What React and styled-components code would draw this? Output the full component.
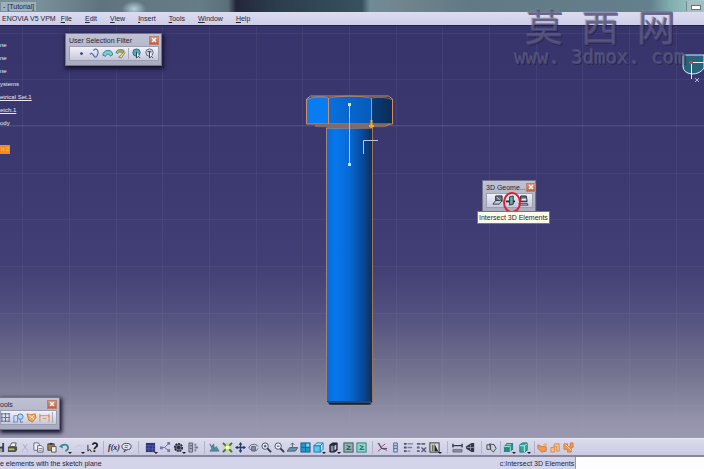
import React from "react";
import styled, { createGlobalStyle } from "styled-components";

const GlobalStyle = createGlobalStyle`
  * { box-sizing: border-box; }
  body {
    margin: 0;
    background: #37346a;
    font-family: "Liberation Sans", Arial, sans-serif;
    font-size: 7px;
    line-height: 9px;
    color: #26263a;
  }
  button, input { font: inherit; color: inherit; }
`;

// 12x12 glyphs used by every toolbar
const icons = {
  save: <><rect x="1" y="1" width="10" height="10" fill="#3c4256" /><rect x="3" y="1" width="6" height="4" fill="#d9dcea" /><rect x="3" y="7" width="6" height="4" fill="#9aa5a0" /></>,
  print: <><path d="M3 5 5 1h5L9 5z" fill="#eee" stroke="#555" /><path d="M1 5h10v4l-2 2H1z" fill="#4c5348" /><path d="M2 8h6" stroke="#b5c455" strokeWidth="2" /></>,
  cut: <path d="M3 2l5 7M8 2 3 9M2 10h1M8 10h1" stroke="#aaaac4" />,
  copy: <><path d="M1 1h5l1 2v6H1z" fill="#eef" stroke="#666b80" /><path d="M5 4h4l2 2v5H5z" fill="#fff" stroke="#555b70" /><path d="M6 7h4M6 9h4" stroke="#778" /></>,
  paste: <><path d="M2 2h7v7H2z" fill="#9b8350" stroke="#4a4334" /><path d="M4 1h3v2H4z" fill="#333" /><path d="M6 5h5v6H6z" fill="#eee" stroke="#555" /></>,
  undo: <><path d="M2 5c3-3 7-3 8 1 0 2-1 3-3 4" fill="none" stroke="#3d8a94" strokeWidth="2" /><path d="M0 5l4-3v5z" fill="#3d8a94" /></>,
  redo: <path d="M2 6c2-3 5-3 7-1" fill="none" stroke="#c2c2d8" />,
  help: <><path d="M1 3v7l2-2 2 3" fill="none" stroke="#222" /><path d="M6 3c1-3 6-2 5 1 0 1-3 2-3 4M8 9v2" fill="none" stroke="#222" strokeWidth="2" /></>,
  chat: <><ellipse cx="6" cy="5" rx="5" ry="3.5" fill="#e5e5f2" stroke="#3c3c50" /><path d="M5 8l-2 3 4-3" fill="#e5e5f2" stroke="#3c3c50" /><path d="M4 4h4M4 6h3" stroke="#667" /></>,
  table: <><rect x="1" y="1" width="10" height="10" fill="#2e3682" /><path d="M1 4h10M4 4v7M8 4v7M1 7.500h10" stroke="#6870aa" strokeWidth=".6" /></>,
  tree: <><path d="M2 6h3l4-4M5 6l4 3" stroke="#666a90" fill="none" /><path d="M0 5h3v3H0zM8 0h3v3H8zM8 8h3v3H8z" fill="#7377a0" /></>,
  gear: <><circle cx="6" cy="6" r="4" fill="#777a90" stroke="#252838" strokeWidth="2" strokeDasharray="2 1" /><circle cx="6" cy="6" r="2" fill="#272b3c" /></>,
  law: <><path d="M1 1h4v10H1zM2 4h3M2 7h3" fill="#aab" stroke="#5a5f78" /><path d="M7 3h2M7 6h4M7 9h2" stroke="#777b96" strokeWidth="2" /></>,
  fly: <path d="M1 2l2 3 2-3 1 5 2-2 3 5H1l2-3z" fill="#4b8f9b" stroke="#486376" strokeWidth=".6" />,
  fit: <><rect x="1" y="1" width="10" height="10" fill="#cadf79" /><path d="M1 1l3 3M11 1 8 4M1 11l3-3M11 11 8 8" stroke="#2d7a4a" strokeWidth="2" /><circle cx="6" cy="6" r="2" fill="#fff" /></>,
  pan: <><path d="M6 1v10M1 6h10" stroke="#28386f" strokeWidth="1.5" /><path d="M6 0l2 3H4zM6 12l2-3H4zM0 6l3-2v4zM12 6 9 4v4z" fill="#28386f" /></>,
  rotate: <><path d="M1 7c0-5 8-6 10-2M11 7c-2 4-8 4-9 0" fill="none" stroke="#555b74" /><path d="M4 5h4v4H4z" fill="#8f94ac" stroke="#555b74" /></>,
  zoomIn: <><circle cx="4.500" cy="4.500" r="3.500" fill="#e9f4fa" stroke="#3d4865" /><path d="M7 7l4 4" stroke="#34364a" strokeWidth="2" /><path d="M3 4.500h3M4.500 3v3" stroke="#335" /></>,
  zoomOut: <><circle cx="4.500" cy="4.500" r="3.500" fill="#e9f4fa" stroke="#3d4865" /><path d="M7 7l4 4" stroke="#34364a" strokeWidth="2" /><path d="M3 4.500h3" stroke="#335" /></>,
  normal: <><path d="M0 10l3-4h9l-3 4z" fill="#5f93a8" stroke="#54617c" /><path d="M6 7V1M4 3l2-2 2 2" stroke="#59627a" fill="none" /></>,
  multi: <><rect x="1" y="1" width="10" height="10" fill="#2496c6" stroke="#245b91" /><path d="M6 1v10M1 6h10" stroke="#2b5f94" /><rect x="7" y="2" width="3" height="3" fill="#7fdaf0" /></>,
  cube: <><path d="M1 4h7v7H1z" fill="#56c9ec" stroke="#2177a8" /><path d="M1 4l3-3h7L8 4zM8 4l3-3v7l-3 3z" fill="#a4e9f8" stroke="#2177a8" /></>,
  shade: <><path d="M2 3l3-2h5v8l-3 2H2z" fill="#252936" stroke="#252936" /><path d="M3 4h3v6H3z" fill="#858b9d" /><path d="M7 4l2-1v5l-2 1z" fill="#ccd" /></>,
  hide: <><rect x="1" y="1" width="10" height="10" fill="#8fb5b2" stroke="#394f55" /><path d="M4 4l4 1-4 3h5" fill="none" stroke="#21474b" /></>,
  swap: <><rect x="1" y="1" width="10" height="10" fill="#8ed6c9" stroke="#307b78" /><path d="M4 4l4 1-4 3h5" fill="none" stroke="#155c5d" /></>,
  axis: <><path d="M2 1l3 6 6 2M5 7 1 10M4 6 9 2" stroke="#a53b52" fill="none" /><path d="M1 1l4 6h6" stroke="#3c3f69" fill="none" /></>,
  bar: <path d="M4 1h4v10H4zM4 4h4M4 7h4" fill="#b8cce3" stroke="#566a9c" />,
  list: <><path d="M1 2h3M1 6h3M1 10h3" stroke="#4c526f" strokeWidth="2" /><path d="M5 2h6M5 6h5M5 10h3" stroke="#7a809a" strokeWidth="1.500" /></>,
  listX: <><path d="M1 2h4M1 6h3M1 10h3M6 2h4" stroke="#5c637e" strokeWidth="2" /><path d="M6 6l5 5M11 6l-5 5" stroke="#555b77" strokeWidth="1.500" /></>,
  light: <><rect x="1" y="1" width="10" height="10" fill="#ddd" stroke="#252936" /><path d="M6 2l4 8H6z" fill="#1f222b" /><path d="M3 3h2v7H3z" fill="#717447" /></>,
  measure: <><path d="M1 2v4M11 2v4M1 4h10" stroke="#333950" strokeWidth="1.500" /><path d="M1 8h10v3H1z" fill="#8b90a5" stroke="#424960" strokeWidth=".6" /></>,
  mass: <><path d="M1 5l6-4h3v10H7L1 7z" fill="#343747" /><path d="M6 3v6M2 6h8" stroke="#8e91aa" /></>,
  grab: <path d="M1 3h4v5H1zM4 2l5 1 2 4-3 4-3-3z" fill="#d2cfd6" stroke="#404359" />,
  plane: <><path d="M1 5l3-4h7v7l-3 3H1z" fill="#268b84" /><path d="M1 5h7v6M4 3h5" stroke="#b1e4dc" fill="none" /></>,
  box: <><path d="M2 3l3-2h5v8l-3 2H2z" fill="#37aaa0" stroke="#17736f" /><path d="M2 4h5v7M7 4l3-2" stroke="#bdf1e9" fill="none" /></>,
  orange1: <><path d="M1 3l4 2h5v5l-5 1-4-4z" fill="#ef9b52" stroke="#cf7842" /><circle cx="9" cy="3" r="2" fill="#e8b47e" /></>,
  orange2: <path d="M1 6h4v5H1zM5 2h5v8H7V5H4z" fill="#efc08d" stroke="#d98c50" />,
  orange3: <><path d="M1 2h4v3h3V1h3v5H9v5H5V8H1z" fill="#ef9b57" stroke="#d27b45" /><path d="M3 3l6 6" stroke="#fce0bd" /></>,
  point: <circle cx="6" cy="6" r="1.500" fill="#293a8c" />,
  curve: <path d="M1 7c3-4 4 3 6 3s4-6 2-8-4 0-4 1" fill="none" stroke="#4773aa" strokeWidth="1.300" />,
  surface: <path d="M1 8c0-6 9-8 11-1L9 9C8 6 5 6 4 9z" fill="#7fcbd2" stroke="#28818c" />,
  volume: <><path d="M1 5c1-4 7-4 9-2L8 5C6 4 4 4 3 6z" fill="#a7b862" stroke="#4a6c45" strokeWidth=".8" /><path d="M4 10l6-6 1 1-4 6z" fill="#e7d983" stroke="#6d7044" strokeWidth=".8" /></>,
  selA: <><circle cx="6" cy="5" r="4" fill="#54afb3" stroke="#246d7c" /><path d="M6 4v7l2-2 2 2" stroke="#2b354b" fill="#fff" /></>,
  selB: <><circle cx="6" cy="5" r="4" fill="#cbd3df" stroke="#59667e" /><path d="M6 4v7l2-2 2 2M4 4h4" stroke="#2b354b" fill="#fff" /></>,
  grid: <path d="M1 2h10M1 6h10M1 10h10M2 1v10M6 1v10M10 1v10" stroke="#4b6db1" />,
  snap: <><path d="M1 11V4h4v7M0 11h5" stroke="#5b90cf" fill="none" /><circle cx="8" cy="5" r="3" fill="#b5d6ef" stroke="#487cc0" /><path d="M8 8v3h3" stroke="#487cc0" fill="none" /></>,
  construct: <><path d="M1 2l4 1 5-1 1 4-4 5-4-2z" fill="#f0a354" stroke="#d87729" /><path d="M3 3l6 5M9 3 5 7" stroke="#fff0cd" /></>,
  constraint: <path d="M1 11V4h10v7M4 7h4M1 6V2M11 6V2" fill="none" stroke="#e98543" />,
  project: <><path d="M4 1h7v6H4z" fill="#69717b" stroke="#242936" /><path d="M1 10l3-4h7l-3 4z" fill="#baccd0" stroke="#30394a" /><path d="M5 2l4 4" stroke="#b6e6dd" /></>,
  intersect: <><path d="M1 7h10" stroke="#252d39" strokeWidth="2" /><path d="M5 2l4-1v9l-4 1z" fill="#65aaa4" stroke="#252d39" /></>,
  silhouette: <><path d="M3 1h6l1 6H2z" fill="#647079" stroke="#272b37" /><path d="M1 9h9l1 2H2z" fill="#cce" stroke="#334" /><path d="M4 5h5" stroke="#eee" strokeWidth="2" /></>,
};

const bottomTools = [
  { icon: "save", label: "Save", clipped: true },
  { icon: "print", label: "Print" },
  { icon: "cut", label: "Cut" },
  { icon: "copy", label: "Copy" },
  { icon: "paste", label: "Paste" },
  { icon: "undo", label: "Undo", menu: true },
  { icon: "redo", label: "Redo", menu: true, tight: true },
  { icon: "help", label: "What's this" },
  { sep: 8 },
  { text: "f(x)", label: "Formula" },
  { icon: "chat", label: "Comment" },
  { sep: 11 },
  { icon: "table", label: "Design table", menu: true },
  { icon: "tree", label: "Relations" },
  { icon: "gear", label: "Knowledge", menu: true },
  { icon: "law", label: "Law" },
  { sep: 8 },
  { icon: "fly", label: "Fly mode" },
  { icon: "fit", label: "Fit all in" },
  { icon: "pan", label: "Pan" },
  { icon: "rotate", label: "Rotate" },
  { icon: "zoomIn", label: "Zoom in" },
  { icon: "zoomOut", label: "Zoom out" },
  { icon: "normal", label: "Normal view" },
  { icon: "multi", label: "Multi-view" },
  { icon: "cube", label: "Isometric view", menu: true },
  { icon: "shade", label: "View mode", menu: true },
  { icon: "hide", label: "Hide or show" },
  { icon: "swap", label: "Swap visible space" },
  { sep: 8 },
  { icon: "axis", label: "Axis system" },
  { icon: "bar", label: "Exit" },
  { icon: "list", label: "Mean dimensions" },
  { icon: "listX", label: "Update" },
  { icon: "light", label: "Lighting", menu: true },
  { sep: 8 },
  { icon: "measure", label: "Measure between" },
  { icon: "mass", label: "Measure inertia" },
  { sep: 8 },
  { icon: "grab", label: "Catalog" },
  { sep: 4 },
  { icon: "plane", label: "Plane", menu: true },
  { icon: "box", label: "Material", menu: true },
  { sep: 4 },
  { icon: "orange1", label: "Part analysis" },
  { icon: "orange2", label: "Body analysis" },
  { icon: "orange3", label: "Assembly analysis" },
];

const menus = ["File", "Edit", "View", "Insert", "Tools", "Window", "Help"];

const treeNodes = [
  { text: "ne" },
  { text: "ne" },
  { text: "ne" },
  { text: "ystems" },
  { text: "etrical Set.1", link: true },
  { text: "etch.1", link: true },
  { text: "ody" },
  { text: "" },
  { text: "h.2", active: true },
];

const Window = styled.div`
  position: relative;
  display: flex;
  flex-direction: column;
  min-height: 100vh;
`;

const TitleBar = styled.header`
  display: flex;
  align-items: center;
  justify-content: space-between;
  height: 12px;
  padding-left: 1px;
  background:
    radial-gradient(ellipse 12px 8px at 134px 9px, #b5d0d8, transparent),
    linear-gradient(90deg, #788f9b 0, #78909a 40px, #60747f 100px, #657d88 200px, #5a6f79 228px, #25253a 236px, #2a3c4b 270px, #37525f 362px, #708c97 370px, #70838c 410px, #607985 470px, #64808c 650px, #82adaf 670px, #a9cbcc 100%);
`;

const Title = styled.h1`
  margin: 0;
  padding: 0 2px;
  font-size: 7px;
  font-weight: 400;
  background: rgba(215, 226, 232, 0.4);
`;

const Minimise = styled.button`
  width: 18px;
  height: 10px;
  padding: 0;
  border: 0;
  border-left: 1px solid #768c91;
  background: #a8bdc0;

  &::before {
    content: "";
    display: block;
    width: 8px;
    height: 3px;
    margin: 2px auto 0;
    border: 1px solid #60747c;
    background: #fff;
  }
`;

const MenuBar = styled.nav`
  display: flex;
  align-items: center;
  gap: 13px;
  height: 13px;
  padding-left: 2px;
  background: linear-gradient(#dcdcf0, #cdcde8);
`;

const MenuItem = styled.button`
  padding: 0;
  border: 0;
  background: none;
  white-space: nowrap;

  &:first-child { margin-right: -8px; }
  &::first-letter { text-decoration: ${({ $plain }) => ($plain ? "none" : "underline")}; }
`;

const Viewport = styled.main`
  position: relative;
  flex: 1;
  min-height: 320px;
  border-top: 1px solid #24214d;
  background: linear-gradient(#37346b 0%, #3b3970 35%, #413f75 58%, #53517f 70%, #74738f 84%, #9291a9 95%, #9999b1 100%);
`;

const Scene = styled.svg`
  position: absolute;
  inset: 0;
  width: 100%;
  height: 100%;
`;

const Tree = styled.ul`
  position: absolute;
  top: 13px;
  left: 0;
  margin: 0;
  padding: 0;
  list-style: none;
  color: #e9e9f8;
`;

const TreeRow = styled.li`
  display: flex;
  align-items: center;
  height: 13px;
  font-size: 6px;
  text-decoration: ${({ $link }) => ($link ? "underline" : "none")};

  span {
    padding: ${({ $active }) => ($active ? "0 1px" : "0")};
    background: ${({ $active }) => ($active ? "#f58a1f" : "none")};
    color: ${({ $active }) => ($active ? "#ffc06e" : "inherit")};
  }
`;

const Palette = styled.section`
  position: absolute;
  top: ${({ $top }) => $top};
  bottom: ${({ $bottom }) => $bottom};
  left: ${({ $left }) => $left};
  width: ${({ $width }) => $width};
  padding: 0 2px 4px 3px;
  border: 1px solid #74748c;
  border-left-width: ${({ $docked }) => ($docked ? "0" : "1px")};
  padding-left: ${({ $docked }) => ($docked ? "0" : "3px")};
  background: linear-gradient(#bfc2d2, #a9acbf);
  box-shadow: ${({ $flat }) => ($flat ? "none" : "1px 2px 4px 1px #15132f")};
`;

const PaletteHead = styled.header`
  display: flex;
  align-items: center;
  justify-content: space-between;
  height: 12px;

  h2 {
    margin: 0;
    font-size: 7px;
    font-weight: 400;
    white-space: nowrap;
  }
`;

const Close = styled.button`
  display: flex;
  flex: none;
  align-items: center;
  justify-content: center;
  width: 10px;
  height: 9px;
  padding: 0;
  border: 1px solid #b9826f;
  background: linear-gradient(#dd9478, #c35c3e);
  color: #fff;

  svg { width: 6px; height: 6px; }
`;

const PaletteTools = styled.div`
  display: flex;
  align-items: center;
  justify-content: flex-end;
  height: 15px;
  padding-right: 2px;
  border: 1px solid #9c9fb4;
  background: linear-gradient(#f1f1fa, #c6c7da);
`;

const ToolButton = styled.button`
  position: relative;
  display: flex;
  flex: none;
  align-items: center;
  justify-content: ${({ $clipped }) => ($clipped ? "flex-end" : "flex-start")};
  width: ${({ $clipped, $menu }) => ($clipped ? "6px" : $menu ? "15px" : "13px")};
  height: 13px;
  padding: 0 1px;
  overflow: hidden;
  border: 0;
  background: none;
  font: italic 700 8px/11px "Liberation Serif", serif;

  svg { flex: none; width: 11px; height: 11px; }

  &::after {
    content: "";
    display: ${({ $menu, $tight }) => ($menu || $tight ? "block" : "none")};
    position: absolute;
    right: 1px;
    bottom: 0;
    border: 2px solid transparent;
    border-top-color: #1d1d2a;
    border-bottom: 0;
  }
`;

const Rule = styled.span`
  flex: none;
  width: 1px;
  height: 11px;
  margin: 0 1px;
  background: #a7a8bf;
`;

const Ring = styled.span`
  position: absolute;
  top: 11px;
  left: 20px;
  width: 18px;
  height: 21px;
  border: 2px solid #d8232f;
  border-radius: 50%;
`;

const Tooltip = styled.div`
  position: absolute;
  top: 30px;
  left: -6px;
  padding: 1px;
  border: 1px solid #77776d;
  background: #fbfbe9;
  white-space: nowrap;
`;

const Watermark = styled.div`
  position: absolute;
  top: 3px;
  right: 18px;
  display: flex;
  flex-direction: column;
  align-items: center;
  pointer-events: none;
  color: rgba(97, 95, 134, 0.55);
  text-shadow: -1px -1px 0 rgba(150, 149, 182, 0.25), 1px 1px 0 rgba(32, 29, 65, 0.6);
`;

const Name = styled.div`
  display: flex;
  gap: 18px;
  font: 38px/44px "Noto Sans CJK SC", sans-serif;
`;

const Address = styled.div`
  font: 19px/20px "DejaVu Sans Mono", monospace;
  white-space: pre;
`;

const BottomBar = styled.div`
  display: flex;
  align-items: center;
  height: 19px;
  padding-top: 1px;
  overflow: hidden;
  border-top: 1px solid #e9e9f5;
  border-bottom: 2px solid #85869c;
  background: linear-gradient(#dcdcee, #cacae2);
`;

const Gap = styled.span`
  flex: none;
  width: ${({ $size }) => $size}px;
  height: 13px;
  background: linear-gradient(#b2b2ca, #b2b2ca) center / 1px 100% no-repeat;
`;

const StatusBar = styled.footer`
  display: flex;
  align-items: center;
  justify-content: space-between;
  height: 12px;
  background: #d3d3ea;
`;

const Message = styled.p`
  margin: 0;
  white-space: nowrap;
`;

const Command = styled.label`
  display: flex;
  align-items: center;
  gap: 1px;
  width: 29%;
  white-space: nowrap;

  input {
    flex: 1;
    min-width: 0;
    height: 12px;
    padding: 0 2px;
    border: 0;
    border-left: 1px solid #9697ae;
    background: #fdfdff;
    outline: 0;
  }
`;

const Tool = ({ icon, text, label, menu, tight, clipped }) => (
  <ToolButton aria-label={label} $menu={menu && !tight} $tight={tight} $clipped={clipped}>
    {text || <svg viewBox="0 0 12 12" fill="none">{icons[icon]}</svg>}
  </ToolButton>
);

const CloseButton = () => (
  <Close aria-label="Close">
    <svg viewBox="0 0 6 6"><path d="M1 1l4 4M5 1 1 5" stroke="#fff" strokeWidth="1.500" /></svg>
  </Close>
);

const columns = [22, 69, 116, 162, 209, 256, 302, 349, 396, 442, 489, 536, 582, 629, 676];
const rows = [33, 79, 126, 173, 219, 266, 313, 359, 406];

const Bolt = () => (
  <Scene viewBox="0 26 704 412" preserveAspectRatio="xMidYMid slice" aria-hidden="true">
    <defs>
      <linearGradient id="shank">
        <stop offset="0" stopColor="#0969d4" />
        <stop offset=".2" stopColor="#0577ee" />
        <stop offset=".5" stopColor="#0869d5" />
        <stop offset=".78" stopColor="#07499a" />
        <stop offset="1" stopColor="#102c54" />
      </linearGradient>
      <linearGradient id="face">
        <stop offset="0" stopColor="#0871df" />
        <stop offset="1" stopColor="#075bb9" />
      </linearGradient>
      <linearGradient id="side">
        <stop offset="0" stopColor="#083c79" />
        <stop offset="1" stopColor="#0b2c55" />
      </linearGradient>
    </defs>

    <g stroke="#a4a3bc" strokeOpacity=".09" shapeRendering="crispEdges">
      {columns.map((x) => <path key={x} d={`M${x}.5 25V438`} />)}
      {rows.map((y) => <path key={y} d={`M0 ${y}.5H704`} />)}
    </g>
    <path d="M0 125.500H704M0 405.500H704M349.500 406V438" stroke="#9b99b5" strokeOpacity=".2" />

    <path d="M306 99q10-5 22-2v27h-22z" fill="#087cf0" />
    <path d="M328 98q21-4 43 0v26h-43z" fill="url(#face)" />
    <path d="M371 97q15-2 22 2v25h-22z" fill="url(#side)" />
    <path d="M315 124h75l-6 4h-65z" fill="#34496e" />
    <path d="M326 128h47v272l-3 5h-41l-3-5z" fill="url(#shank)" />
    <path d="M327 401h46l-3 4h-40z" fill="#10233e" />
    <path d="M328 402h43" stroke="#5b9de5" strokeOpacity=".6" />
    <g fill="none" stroke="#d58c58">
      <path d="M306.500 124V99l4-3h78l4 3v25zM328.500 98v26M371.500 98v26" />
      <path d="M306 100q11-5 22-2 21-4 43 0 14-2 22 2" strokeOpacity=".6" />
      <path d="M315 126h71l4-2M326.500 128h46" />
      <path d="M326.500 128v273M372.500 128v273" strokeOpacity=".75" />
      <path d="M326 401l4 4h39l4-4" strokeOpacity=".4" />
    </g>
    <path d="M371.500 120v8M369 126h5" stroke="#f4ae23" strokeWidth="2" />
    <path d="M349.500 104v61" stroke="#b9d1b5" />
    <path d="M349.500 118v12" stroke="#dfb95c" />
    <path d="M348 103h3v3h-3z" fill="#f1e48a" />
    <path d="M348 163h3v3h-3z" fill="#bfe4e6" />
    <path d="M378 140.500h-14.500V154" fill="none" stroke="#bcc4dd" />
  </Scene>
);

const Compass = styled.svg`
  position: absolute;
  top: 26px;
  right: 0;
  width: 24px;
  height: 32px;
`;

const App = () => {
  return (
    <Window>
      <GlobalStyle />
      <TitleBar>
        <Title>- [Tutorial]</Title>
        <Minimise aria-label="Minimise" />
      </TitleBar>

      <MenuBar>
        <MenuItem $plain>ENOVIA V5 VPM</MenuItem>
        {menus.map((name) => <MenuItem key={name}>{name}</MenuItem>)}
      </MenuBar>

      <Viewport>
        <Bolt />
        <Tree>
          {treeNodes.map(({ text, link, active }, i) => (
            <TreeRow key={i} $link={link} $active={active}><span>{text}</span></TreeRow>
          ))}
        </Tree>

        <Palette $top="7px" $left="65px" $width="97px">
          <PaletteHead><h2>User Selection Filter</h2><CloseButton /></PaletteHead>
          <PaletteTools>
            <Tool icon="point" label="Point filter" />
            <Tool icon="curve" label="Curve filter" />
            <Tool icon="surface" label="Surface filter" />
            <Tool icon="volume" label="Volume filter" />
            <Rule />
            <Tool icon="selA" label="Feature filter" />
            <Tool icon="selB" label="Geometry filter" />
          </PaletteTools>
        </Palette>

        <Palette $top="154px" $left="482px" $width="54px" $flat>
          <PaletteHead><h2>3D Geome...</h2><CloseButton /></PaletteHead>
          <PaletteTools>
            <Tool icon="project" label="Project 3D Elements" />
            <Tool icon="intersect" label="Intersect 3D Elements" />
            <Tool icon="silhouette" label="Project Silhouette Edges" />
          </PaletteTools>
          <Ring />
          <Tooltip role="tooltip">Intersect 3D Elements</Tooltip>
        </Palette>

        <Palette $bottom="8px" $left="0" $width="60px" $docked>
          <PaletteHead><h2>ools</h2><CloseButton /></PaletteHead>
          <PaletteTools>
            <Tool icon="grid" label="Grid" />
            <Tool icon="snap" label="Snap to point" />
            <Tool icon="construct" label="Construction element" />
            <Tool icon="constraint" label="Constraints" />
            <Rule />
          </PaletteTools>
        </Palette>

        <Compass viewBox="680 52 24 32" fill="none" aria-hidden="true">
          <path d="M683 55h21v13q-4 6-12 6-9-1-9-8z" fill="#26657c" stroke="#dbeaf2" />
          <path d="M691.500 62v17M692 62.500h12" stroke="#e8edf5" />
          <path d="M689 61h4v3h-4z" fill="#ee2f35" />
          <path d="M695 78l4 4M699 78l-4 4" stroke="#aeb2cf" />
        </Compass>
      </Viewport>

      <BottomBar role="toolbar">
        {bottomTools.map((tool, i) => (tool.sep ? <Gap key={i} $size={tool.sep} /> : <Tool key={i} {...tool} />))}
      </BottomBar>

      <StatusBar>
        <Message>e elements with the sketch plane</Message>
        <Command>
          c:Intersect 3D Elements
          <input type="text" />
        </Command>
      </StatusBar>

      <Watermark>
        <Name><span>莫</span><span>西</span><span>网</span></Name>
        <Address>www. 3dmox. com</Address>
      </Watermark>
    </Window>
  );
};

export default App;
